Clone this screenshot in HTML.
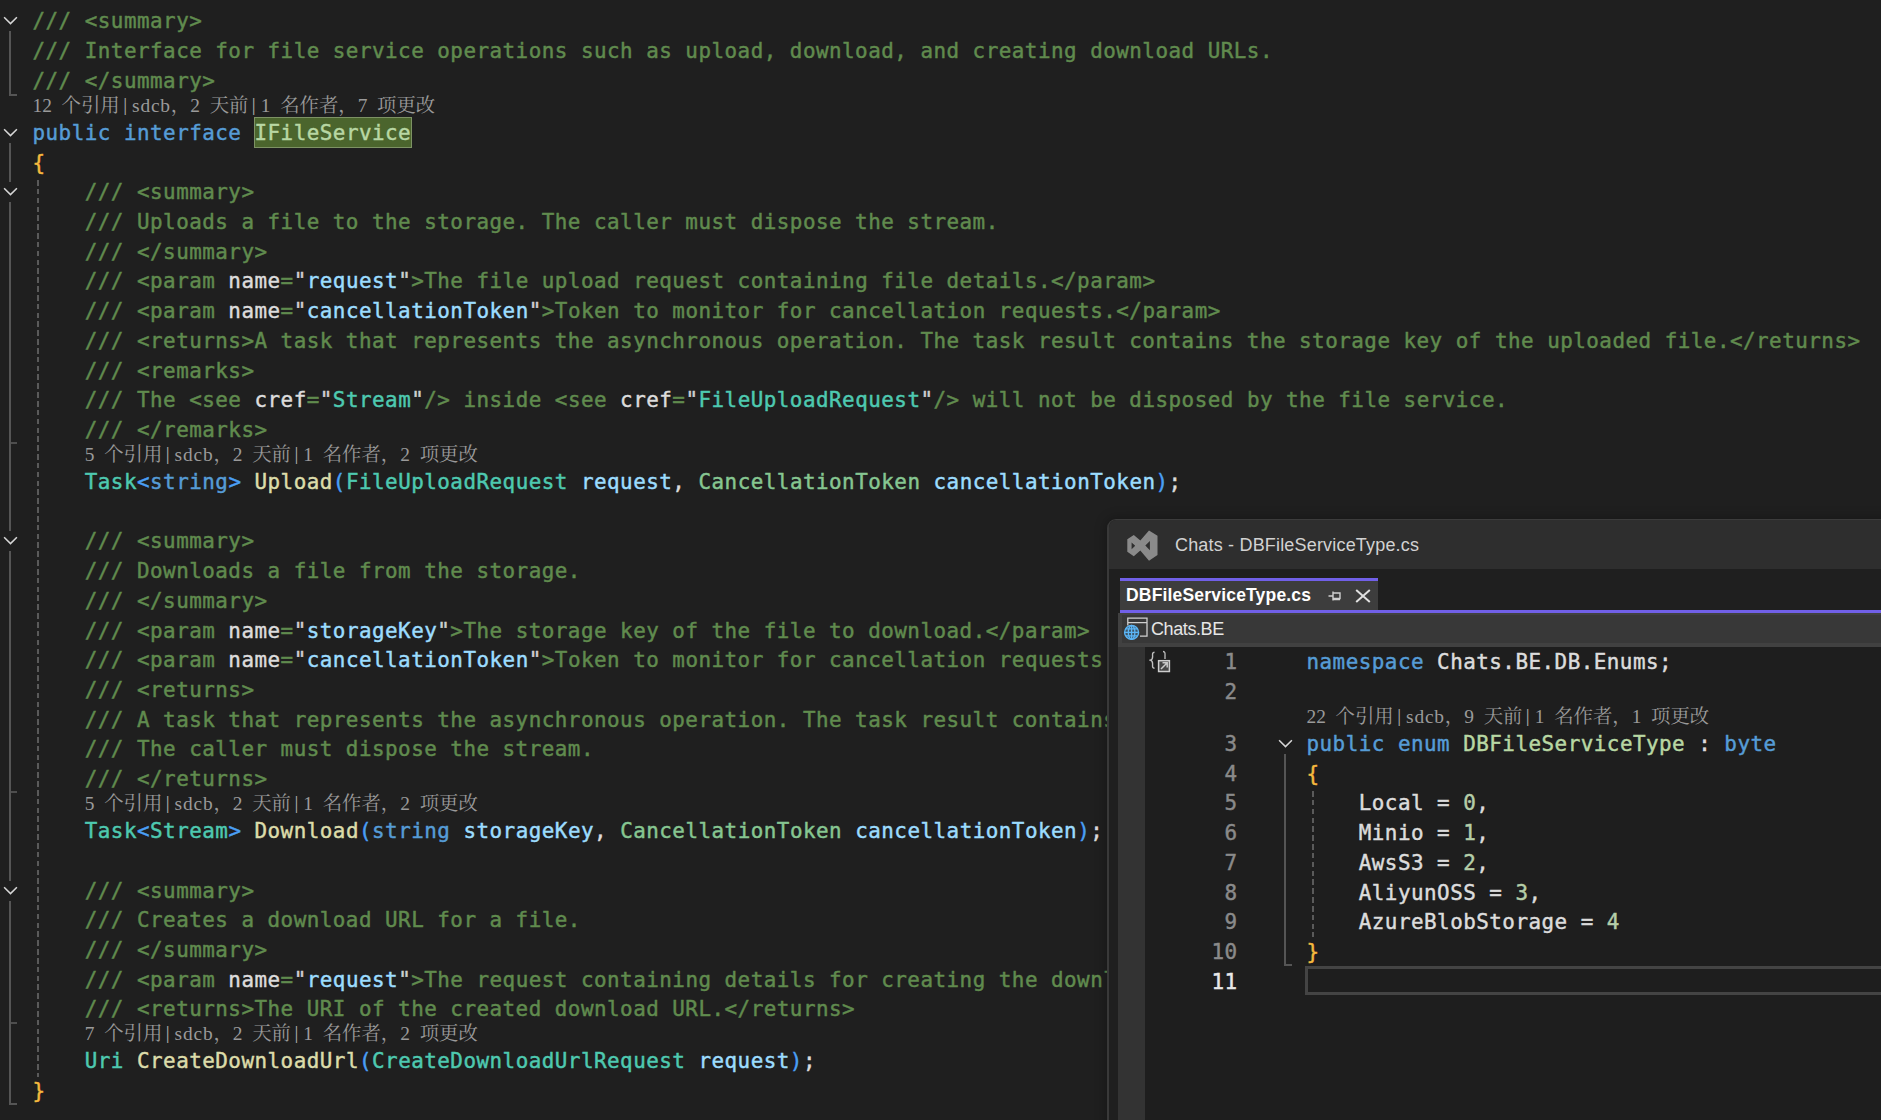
<!DOCTYPE html>
<html lang="zh-CN"><head><meta charset="utf-8"><title>IFileService.cs</title>
<style>
*{box-sizing:border-box}
html,body{margin:0;padding:0;background:#1f1f1f}
body{width:1881px;height:1120px;overflow:hidden;background:#1f1f1f;position:relative;color:#dcdcdc;
 font-family:"DejaVu Sans Mono","Liberation Mono",monospace;font-size:20.9px;-webkit-font-smoothing:antialiased}
.ln{position:absolute;white-space:pre;height:30px;line-height:30px;letter-spacing:0.48px;-webkit-text-stroke:.45px}
.cl{position:absolute;white-space:pre;height:22px;line-height:22px;font-family:"Liberation Serif","Noto Serif CJK SC",serif;font-size:19.4px;color:#9a9a9a;word-spacing:4.85px}
.cl .sp{display:inline-block;width:12.3px;text-align:left;padding-left:3.4px;color:#b0b0b0;position:relative;top:-1.5px}
.cl .ls{letter-spacing:.81px}
.c{color:#608b4e}.k{color:#569cd6}.t{color:#4ec9b0}.m{color:#dcdcaa}.v{color:#9cdcfe}
.b{color:#4a9ff5}.y{color:#f5b93e}.a{color:#dcdcdc}.q{color:#d0d0d0}.i{color:#b8d7a3}.s{color:#86c691}.n{color:#b5cea8}
.hl{color:#b8d7a3;background:#4b652d;box-shadow:0 0 0 1px #7d9264 inset;display:inline-block;height:31px;line-height:30px;vertical-align:top;margin:-1px -.5px 0 -.5px;padding:1px .5px 0}
.abs{position:absolute}
.vl{position:absolute;width:2px;background:#555}
.tick{position:absolute;height:2px;background:#555}
</style></head>
<body>
<div id="main">
<div class="ln" style="left:32.5px;top:6px"><span class="c">/// &lt;summary&gt;</span></div>
<div class="ln" style="left:32.5px;top:36px"><span class="c">/// Interface for file service operations such as upload, download, and creating download URLs.</span></div>
<div class="ln" style="left:32.5px;top:66px"><span class="c">/// &lt;/summary&gt;</span></div>
<div class="cl" style="left:32.5px;top:95px">12 个引用<span class="sp">|</span><span class="ls">sdcb</span>，2 天前<span class="sp">|</span>1 名作者，7 项更改</div>
<div class="ln" style="left:32.5px;top:118px"><span class="k">public</span> <span class="k">interface</span> <span class="hl">IFileService</span></div>
<div class="ln" style="left:32.5px;top:148px"><span class="y">{</span></div>
<div class="ln" style="left:32.5px;top:177px"><span class="c">    /// &lt;summary&gt;</span></div>
<div class="ln" style="left:32.5px;top:207px"><span class="c">    /// Uploads a file to the storage. The caller must dispose the stream.</span></div>
<div class="ln" style="left:32.5px;top:237px"><span class="c">    /// &lt;/summary&gt;</span></div>
<div class="ln" style="left:32.5px;top:266px"><span class="c">    /// &lt;param </span><span class="a">name</span><span class="c">=</span><span class="q">"</span><span class="v">request</span><span class="q">"</span><span class="c">&gt;The file upload request containing file details.&lt;/param&gt;</span></div>
<div class="ln" style="left:32.5px;top:296px"><span class="c">    /// &lt;param </span><span class="a">name</span><span class="c">=</span><span class="q">"</span><span class="v">cancellationToken</span><span class="q">"</span><span class="c">&gt;Token to monitor for cancellation requests.&lt;/param&gt;</span></div>
<div class="ln" style="left:32.5px;top:326px"><span class="c">    /// &lt;returns&gt;A task that represents the asynchronous operation. The task result contains the storage key of the uploaded file.&lt;/returns&gt;</span></div>
<div class="ln" style="left:32.5px;top:356px"><span class="c">    /// &lt;remarks&gt;</span></div>
<div class="ln" style="left:32.5px;top:385px"><span class="c">    /// The &lt;see </span><span class="a">cref</span><span class="c">=</span><span class="q">"</span><span class="t">Stream</span><span class="q">"</span><span class="c">/&gt; inside &lt;see </span><span class="a">cref</span><span class="c">=</span><span class="q">"</span><span class="t">FileUploadRequest</span><span class="q">"</span><span class="c">/&gt; will not be disposed by the file service.</span></div>
<div class="ln" style="left:32.5px;top:415px"><span class="c">    /// &lt;/remarks&gt;</span></div>
<div class="cl" style="left:84.74px;top:444px">5 个引用<span class="sp">|</span><span class="ls">sdcb</span>，2 天前<span class="sp">|</span>1 名作者，2 项更改</div>
<div class="ln" style="left:32.5px;top:467px">    <span class="t">Task</span><span class="b">&lt;</span><span class="k">string</span><span class="b">&gt;</span> <span class="m">Upload</span><span class="b">(</span><span class="t">FileUploadRequest</span> <span class="v">request</span>, <span class="s">CancellationToken</span> <span class="v">cancellationToken</span><span class="b">)</span>;</div>
<div class="ln" style="left:32.5px;top:526px"><span class="c">    /// &lt;summary&gt;</span></div>
<div class="ln" style="left:32.5px;top:556px"><span class="c">    /// Downloads a file from the storage.</span></div>
<div class="ln" style="left:32.5px;top:586px"><span class="c">    /// &lt;/summary&gt;</span></div>
<div class="ln" style="left:32.5px;top:616px"><span class="c">    /// &lt;param </span><span class="a">name</span><span class="c">=</span><span class="q">"</span><span class="v">storageKey</span><span class="q">"</span><span class="c">&gt;The storage key of the file to download.&lt;/param&gt;</span></div>
<div class="ln" style="left:32.5px;top:645px"><span class="c">    /// &lt;param </span><span class="a">name</span><span class="c">=</span><span class="q">"</span><span class="v">cancellationToken</span><span class="q">"</span><span class="c">&gt;Token to monitor for cancellation requests.&lt;/param&gt;</span></div>
<div class="ln" style="left:32.5px;top:675px"><span class="c">    /// &lt;returns&gt;</span></div>
<div class="ln" style="left:32.5px;top:705px"><span class="c">    /// A task that represents the asynchronous operation. The task result contains the stream of the downloaded file.</span></div>
<div class="ln" style="left:32.5px;top:734px"><span class="c">    /// The caller must dispose the stream.</span></div>
<div class="ln" style="left:32.5px;top:764px"><span class="c">    /// &lt;/returns&gt;</span></div>
<div class="cl" style="left:84.74px;top:793px">5 个引用<span class="sp">|</span><span class="ls">sdcb</span>，2 天前<span class="sp">|</span>1 名作者，2 项更改</div>
<div class="ln" style="left:32.5px;top:816px">    <span class="t">Task</span><span class="b">&lt;</span><span class="t">Stream</span><span class="b">&gt;</span> <span class="m">Download</span><span class="b">(</span><span class="k">string</span> <span class="v">storageKey</span>, <span class="s">CancellationToken</span> <span class="v">cancellationToken</span><span class="b">)</span>;</div>
<div class="ln" style="left:32.5px;top:876px"><span class="c">    /// &lt;summary&gt;</span></div>
<div class="ln" style="left:32.5px;top:905px"><span class="c">    /// Creates a download URL for a file.</span></div>
<div class="ln" style="left:32.5px;top:935px"><span class="c">    /// &lt;/summary&gt;</span></div>
<div class="ln" style="left:32.5px;top:965px"><span class="c">    /// &lt;param </span><span class="a">name</span><span class="c">=</span><span class="q">"</span><span class="v">request</span><span class="q">"</span><span class="c">&gt;The request containing details for creating the download URL.&lt;/param&gt;</span></div>
<div class="ln" style="left:32.5px;top:994px"><span class="c">    /// &lt;returns&gt;The URI of the created download URL.&lt;/returns&gt;</span></div>
<div class="cl" style="left:84.74px;top:1023px">7 个引用<span class="sp">|</span><span class="ls">sdcb</span>，2 天前<span class="sp">|</span>1 名作者，2 项更改</div>
<div class="ln" style="left:32.5px;top:1046px">    <span class="t">Uri</span> <span class="m">CreateDownloadUrl</span><span class="b">(</span><span class="t">CreateDownloadUrlRequest</span> <span class="v">request</span><span class="b">)</span>;</div>
<div class="ln" style="left:32.5px;top:1076px"><span class="y">}</span></div>
<svg class="abs" style="left:3.1px;top:16.2px" width="15" height="10" viewBox="0 0 15 10"><path d="M1.1 1.3 L7.5 7.6 L13.9 1.3" fill="none" stroke="#d6d6d6" stroke-width="1.55"/></svg><svg class="abs" style="left:3.1px;top:128.2px" width="15" height="10" viewBox="0 0 15 10"><path d="M1.1 1.3 L7.5 7.6 L13.9 1.3" fill="none" stroke="#d6d6d6" stroke-width="1.55"/></svg><svg class="abs" style="left:3.1px;top:187.2px" width="15" height="10" viewBox="0 0 15 10"><path d="M1.1 1.3 L7.5 7.6 L13.9 1.3" fill="none" stroke="#d6d6d6" stroke-width="1.55"/></svg><svg class="abs" style="left:3.1px;top:536.2px" width="15" height="10" viewBox="0 0 15 10"><path d="M1.1 1.3 L7.5 7.6 L13.9 1.3" fill="none" stroke="#d6d6d6" stroke-width="1.55"/></svg><svg class="abs" style="left:3.1px;top:886.2px" width="15" height="10" viewBox="0 0 15 10"><path d="M1.1 1.3 L7.5 7.6 L13.9 1.3" fill="none" stroke="#d6d6d6" stroke-width="1.55"/></svg><div class="vl" style="left:9px;top:31px;height:65px"></div><div class="tick" style="left:9px;top:94px;width:8px"></div><div class="vl" style="left:9px;top:143px;height:39px"></div><div class="vl" style="left:9px;top:202px;height:329px"></div><div class="vl" style="left:9px;top:551px;height:330px"></div><div class="vl" style="left:9px;top:901px;height:204px"></div><div class="tick" style="left:9px;top:1103px;width:8px"></div><div class="tick" style="left:11px;top:442px;width:6px;height:2px;background:#4e4e4e"></div><div class="tick" style="left:11px;top:791px;width:6px;height:2px;background:#4e4e4e"></div><div class="tick" style="left:11px;top:1022px;width:6px;height:2px;background:#4e4e4e"></div><div class="abs" style="left:37px;top:180px;width:2px;height:897px;background:repeating-linear-gradient(to bottom,#5a5a5a 0,#5a5a5a 5.6px,transparent 5.6px,transparent 8.84px)"></div>
</div>
<div id="pop" class="abs" style="left:1107px;top:519px;width:900px;height:700px;background:#1f1f1f;border:1px solid #3c3c3c;border-left:2px solid #393939;border-radius:9px 0 0 0;box-shadow:0 0 12px 1px rgba(0,0,0,.28);overflow:hidden;font-family:'Liberation Sans','Noto Sans CJK SC',sans-serif">
<div class="abs" style="left:-1px;top:0px;width:900px;height:49px;background:#2e2e2e;"></div>
<svg class="abs" style="left:17.5px;top:9.5px" width="31" height="31" viewBox="0 0 31 31"><path fill="#8a8a8a" fill-rule="evenodd" d="M22 0.4 L30.5 5.8 V25 L22 30.8 L13.3 20.6 L6.8 26.3 L0.3 21.8 V9.3 L6.8 4.9 L13.3 10.6 Z M4.6 12.4 V19.3 L8.2 15.8 Z M22.9 11 V20.2 L18.3 15.6 Z"/></svg>
<div class="abs" style="left:66px;top:10px;font-size:18px;line-height:30px;color:#d2d2d2;white-space:pre;letter-spacing:.18px">Chats - DBFileServiceType.cs</div>
<div class="abs" style="left:11px;top:58px;width:258px;height:32px;background:#3d3d3d;border-top:3px solid #7160e8"></div>
<div class="abs" style="left:17px;top:61px;font-size:17.5px;font-weight:bold;line-height:28px;color:#fff;white-space:pre;letter-spacing:.18px">DBFileServiceType.cs</div>
<svg class="abs" style="left:218.5px;top:70px" width="14" height="12" viewBox="0 0 14 12"><path d="M0.5 6 H5 M5 1.5 V10.5 M5 3 H12 V8.5 H5 M5 9.5 H12" fill="none" stroke="#d0d0d0" stroke-width="1.4"/></svg>
<svg class="abs" style="left:245.5px;top:69px" width="16" height="14" viewBox="0 0 16 14"><path d="M1.2 1 L14.8 13 M14.8 1 L1.2 13" fill="none" stroke="#e0e0e0" stroke-width="2"/></svg>
<div class="abs" style="left:11px;top:90px;width:900px;height:3px;background:#7160e8;"></div>
<div class="abs" style="left:9px;top:93px;width:900px;height:34px;background:#414141;"></div>
<div class="abs" style="left:13px;top:95px;width:900px;height:28px;background:#383838;"></div>
<svg class="abs" style="left:14px;top:96px" width="26" height="26" viewBox="0 0 26 26"><path d="M4.8 9.5 V2.2 H24 V20.1 H17 M4.8 6.6 H24" fill="none" stroke="#cfcfcf" stroke-width="1.3"/><circle cx="8.6" cy="16.4" r="7" fill="#3c566a" stroke="#5bb5f5" stroke-width="1.4"/><path d="M1.6 16.4 H15.6 M8.6 9.4 V23.4 M2.6 12.9 H14.6 M2.6 19.9 H14.6" fill="none" stroke="#5bb5f5" stroke-width="1.3"/><ellipse cx="8.6" cy="16.4" rx="3.3" ry="7" fill="none" stroke="#5bb5f5" stroke-width="1.3"/></svg>
<div class="abs" style="left:42px;top:95px;font-size:18px;line-height:28px;color:#e6e6e6;white-space:pre;letter-spacing:-.4px">Chats.BE</div>
<div class="abs" style="left:9px;top:127px;width:27px;height:600px;background:#333333;"></div>
<div class="abs" style="left:36px;top:127px;width:900px;height:600px;background:#1e1e1e;"></div>
<svg class="abs" style="left:40px;top:130px" width="24" height="24" viewBox="0 0 24 24"><path d="M5.5 2.2 C3 2.2 3.6 4.7 3.6 6.7 C3.6 8.7 2.8 9.8 1.4 10.2 C2.8 10.7 3.6 11.7 3.6 13.7 C3.6 16.2 3 18.2 5.5 18.2" fill="none" stroke="#c0c0c0" stroke-width="1.4"/><path d="M14 1.5 C16.5 1.5 16 4 16 6 V9" fill="none" stroke="#c0c0c0" stroke-width="1.3"/><rect x="9.6" y="10.7" width="10.8" height="10.8" fill="#454545" stroke="#cdcdcd" stroke-width="1.5"/><path d="M12 19 L18 13 M13.5 12.8 H18.2 V17.5" fill="none" stroke="#c8c8c8" stroke-width="1.5"/></svg>
<div class="ln" style="font-family:'DejaVu Sans Mono','Liberation Mono',monospace;left:41px;top:127px;width:87.5px;text-align:right;color:#8a8a8a">1</div>
<div class="ln" style="font-family:'DejaVu Sans Mono','Liberation Mono',monospace;left:197.5px;top:127px"><span class="k">namespace</span> Chats.BE.DB.Enums;</div>
<div class="ln" style="font-family:'DejaVu Sans Mono','Liberation Mono',monospace;left:41px;top:157px;width:87.5px;text-align:right;color:#8a8a8a">2</div>
<div class="cl" style="left:197.5px;top:186px">22 个引用<span class="sp">|</span><span class="ls">sdcb</span>，9 天前<span class="sp">|</span>1 名作者，1 项更改</div>
<div class="ln" style="font-family:'DejaVu Sans Mono','Liberation Mono',monospace;left:41px;top:209px;width:87.5px;text-align:right;color:#8a8a8a">3</div>
<div class="ln" style="font-family:'DejaVu Sans Mono','Liberation Mono',monospace;left:197.5px;top:209px"><span class="k">public</span> <span class="k">enum</span> <span class="i">DBFileServiceType</span> : <span class="k">byte</span></div>
<div class="ln" style="font-family:'DejaVu Sans Mono','Liberation Mono',monospace;left:41px;top:239px;width:87.5px;text-align:right;color:#8a8a8a">4</div>
<div class="ln" style="font-family:'DejaVu Sans Mono','Liberation Mono',monospace;left:197.5px;top:239px"><span class="y">{</span></div>
<div class="ln" style="font-family:'DejaVu Sans Mono','Liberation Mono',monospace;left:41px;top:268px;width:87.5px;text-align:right;color:#8a8a8a">5</div>
<div class="ln" style="font-family:'DejaVu Sans Mono','Liberation Mono',monospace;left:197.5px;top:268px">    Local = <span class="n">0</span>,</div>
<div class="ln" style="font-family:'DejaVu Sans Mono','Liberation Mono',monospace;left:41px;top:298px;width:87.5px;text-align:right;color:#8a8a8a">6</div>
<div class="ln" style="font-family:'DejaVu Sans Mono','Liberation Mono',monospace;left:197.5px;top:298px">    Minio = <span class="n">1</span>,</div>
<div class="ln" style="font-family:'DejaVu Sans Mono','Liberation Mono',monospace;left:41px;top:328px;width:87.5px;text-align:right;color:#8a8a8a">7</div>
<div class="ln" style="font-family:'DejaVu Sans Mono','Liberation Mono',monospace;left:197.5px;top:328px">    AwsS3 = <span class="n">2</span>,</div>
<div class="ln" style="font-family:'DejaVu Sans Mono','Liberation Mono',monospace;left:41px;top:358px;width:87.5px;text-align:right;color:#8a8a8a">8</div>
<div class="ln" style="font-family:'DejaVu Sans Mono','Liberation Mono',monospace;left:197.5px;top:358px">    AliyunOSS = <span class="n">3</span>,</div>
<div class="ln" style="font-family:'DejaVu Sans Mono','Liberation Mono',monospace;left:41px;top:387px;width:87.5px;text-align:right;color:#8a8a8a">9</div>
<div class="ln" style="font-family:'DejaVu Sans Mono','Liberation Mono',monospace;left:197.5px;top:387px">    AzureBlobStorage = <span class="n">4</span></div>
<div class="ln" style="font-family:'DejaVu Sans Mono','Liberation Mono',monospace;left:41px;top:417px;width:87.5px;text-align:right;color:#8a8a8a">10</div>
<div class="ln" style="font-family:'DejaVu Sans Mono','Liberation Mono',monospace;left:197.5px;top:417px"><span class="y">}</span></div>
<div class="ln" style="font-family:'DejaVu Sans Mono','Liberation Mono',monospace;left:41px;top:447px;width:87.5px;text-align:right;color:#e8e8e8">11</div>
<div class="abs" style="left:196px;top:446px;width:700px;height:29px;border:3px solid #444"></div>
<svg class="abs" style="left:168.9px;top:219.2px" width="15" height="10" viewBox="0 0 15 10"><path d="M1.1 1.3 L7.5 7.6 L13.9 1.3" fill="none" stroke="#d6d6d6" stroke-width="1.55"/></svg><div class="vl" style="left:175.4px;top:234px;height:212px"></div><div class="tick" style="left:175.4px;top:444px;width:7.6px"></div><div class="abs" style="left:203.1px;top:271px;width:2px;height:146px;background:repeating-linear-gradient(to bottom,#5a5a5a 0,#5a5a5a 5.6px,transparent 5.6px,transparent 8.84px)"></div>
</div>
</body></html>
